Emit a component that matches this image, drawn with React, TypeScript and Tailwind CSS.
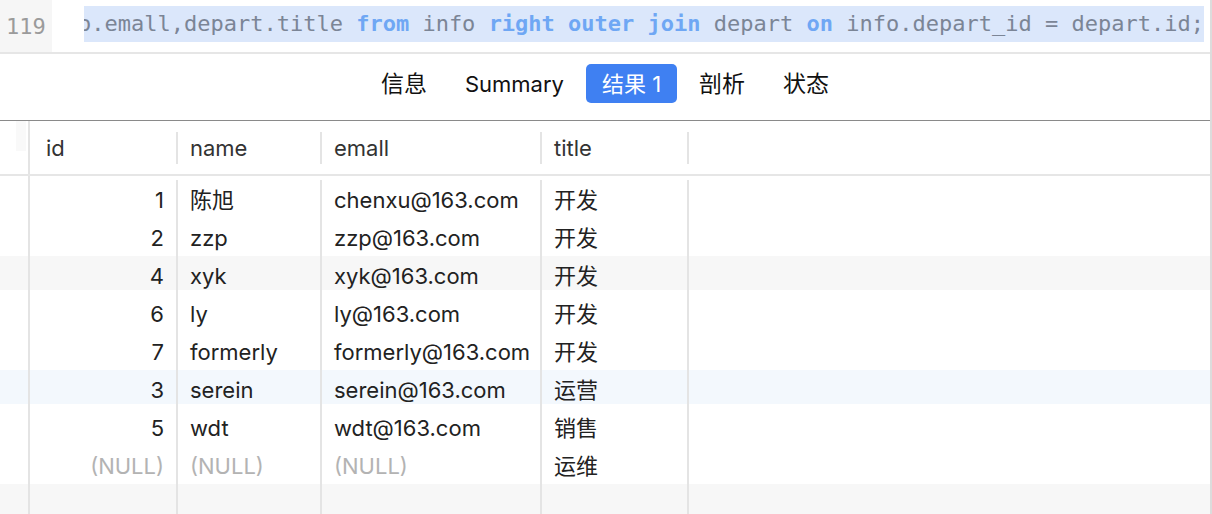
import React from "react";

type Row = { id: string; name: string; email: string; title: string; bg: string; nul?: boolean };

const rows: Row[] = [
  { id: "1", name: "陈旭", email: "chenxu@163.com", title: "开发", bg: "" },
  { id: "2", name: "zzp", email: "zzp@163.com", title: "开发", bg: "" },
  { id: "4", name: "xyk", email: "xyk@163.com", title: "开发", bg: "bg-[linear-gradient(to_bottom,#f7f7f7_34px,transparent_34px)]" },
  { id: "6", name: "ly", email: "ly@163.com", title: "开发", bg: "" },
  { id: "7", name: "formerly", email: "formerly@163.com", title: "开发", bg: "" },
  { id: "3", name: "serein", email: "serein@163.com", title: "运营", bg: "bg-[linear-gradient(to_bottom,#f3f8fd_34px,transparent_34px)]" },
  { id: "5", name: "wdt", email: "wdt@163.com", title: "销售", bg: "" },
  { id: "(NULL)", name: "(NULL)", email: "(NULL)", title: "运维", bg: "", nul: true },
  { id: "", name: "", email: "", title: "", bg: "bg-[linear-gradient(to_bottom,#f7f7f7_34px,transparent_34px)]" },
];

function VLine() {
  return <div className="w-[2px] self-stretch bg-[#e4e4e4] shrink-0" />;
}

function HeaderDiv() {
  return (
    <div className="w-[2px] self-stretch shrink-0 flex flex-col pt-[11px] pb-[10px]">
      <div className="flex-1 bg-[#e4e4e4]" />
    </div>
  );
}

export default function App() {
  const nullCls = "text-[#b3b3b3]";
  return (
    <div className="w-[1212px] h-[514px] overflow-hidden bg-white border-r-2 border-[#dcdcdc] [font-family:Inter,'Noto_Sans_CJK_SC',sans-serif] text-[#222]">
      {/* code line */}
      <div className="h-[52px] flex">
        <div className="w-[52px] h-full bg-[#f6f6f6] flex items-center pl-[6px] [font-family:'DejaVu_Sans_Mono',monospace] text-[22px] text-[#9b9b9b]">
          119
        </div>
        <div className="ml-[32px] flex-1 overflow-hidden pt-[6px]">
          <div className="whitespace-nowrap [font-family:'DejaVu_Sans_Mono',monospace] text-[22px] leading-[36px] text-[#7b8596] -ml-[6px]">
            <span className="bg-[#dbe7fb] inline-block">
              o.emall,depart.title <b className="text-[#6fa7f4] font-bold">from</b> info{" "}
              <b className="text-[#6fa7f4] font-bold">right outer join</b> depart{" "}
              <b className="text-[#6fa7f4] font-bold">on</b> info.depart_id = depart.id;
            </span>
          </div>
        </div>
      </div>
      <div className="h-[2px] bg-[#e6e6e6]" />

      {/* tabs */}
      <div className="h-[67px] border-b border-[#8a8a8a] flex justify-center items-start pt-[10px] gap-[6px] text-[22px] text-[#111]">
        <div className="h-[39px] px-[16px] pt-[2px] flex items-center text-[23px]">信息</div>
        <div className="h-[39px] px-[16px] pt-[2px] flex items-center">Summary</div>
        <div className="h-[39px] px-[16px] pt-[2px] flex items-center rounded-[5px] bg-[#3f80f2] text-white">结果 1</div>
        <div className="h-[39px] px-[16px] pt-[2px] flex items-center text-[23px]">剖析</div>
        <div className="h-[39px] px-[16px] pt-[2px] flex items-center text-[23px]">状态</div>
      </div>

      {/* header */}
      <div className="h-[53px] flex text-[22px] text-[#333]">
        <div className="w-[28px] shrink-0 flex justify-end pr-[2px]">
          <div className="w-[10px] h-[30px] bg-[#f9f9f9]" />
        </div>
        <VLine />
        <div className="w-[146px] shrink-0 flex items-center pt-[2px] pl-[16px]">id</div>
        <HeaderDiv />
        <div className="w-[142px] shrink-0 flex items-center pt-[2px] pl-[12px]">name</div>
        <HeaderDiv />
        <div className="w-[218px] shrink-0 flex items-center pt-[2px] pl-[12px]">emall</div>
        <HeaderDiv />
        <div className="w-[145px] shrink-0 flex items-center pt-[2px] pl-[12px]">title</div>
        <HeaderDiv />
        <div className="flex-1" />
      </div>
      <div className="h-[2px] bg-[#e6e6e6]" />
      <div className="h-[4px] flex">
        <div className="w-[28px] shrink-0" />
        <VLine />
      </div>

      {/* body */}
      <div className="flex flex-col text-[22px]">
        {rows.map((r, i) => (
          <div key={i} className={`h-[38px] flex ${r.bg}`}>
            <div className="w-[28px] shrink-0" />
            <VLine />
            <div className={`w-[146px] shrink-0 flex items-center justify-end pt-[2px] pr-[12px] ${r.nul ? nullCls : ""}`}>{r.id}</div>
            <VLine />
            <div className={`w-[142px] shrink-0 flex items-center pt-[2px] pl-[12px] ${r.nul ? nullCls : ""}`}>{r.name}</div>
            <VLine />
            <div className={`w-[218px] shrink-0 flex items-center pt-[2px] pl-[12px] whitespace-nowrap ${r.nul ? nullCls : ""}`}>{r.email}</div>
            <VLine />
            <div className="w-[145px] shrink-0 flex items-center pt-[2px] pl-[12px]">{r.title}</div>
            <VLine />
            <div className="flex-1" />
          </div>
        ))}
      </div>
    </div>
  );
}
